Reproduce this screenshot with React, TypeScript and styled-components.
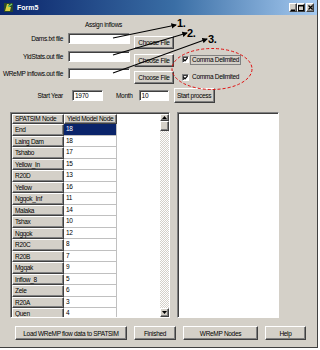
import styled, { createGlobalStyle } from "styled-components";

const GlobalStyle = createGlobalStyle`
  body {
    margin: 0;
    background: #ffffff;
    font-family: "Liberation Sans", Arial, sans-serif;
    font-size: 6.5px;
    letter-spacing: -0.3px;
    color: #000;
  }
`;

const raised = `
  background: #d4d0c8;
  border-top: 1px solid #ffffff;
  border-left: 1px solid #ffffff;
  border-right: 1px solid #404040;
  border-bottom: 1px solid #404040;
  box-shadow: inset -1px -1px 0 #808080;
`;

const sunken = `
  background: #ffffff;
  border-top: 1px solid #808080;
  border-left: 1px solid #808080;
  border-right: 1px solid #ffffff;
  border-bottom: 1px solid #ffffff;
  box-shadow: inset 1px 1px 0 #404040;
`;

const S = {
  Window: styled.div`
    position: relative;
    box-sizing: border-box;
    width: 318px;
    height: 348px;
    background: #d4d0c8;
    border-right: 1px solid #404040;
    border-bottom: 1px solid #404040;
    display: flex;
    flex-direction: column;
  `,
  TitleBar: styled.div`
    height: 15px;
    flex: none;
    display: flex;
    align-items: center;
    padding: 0 3px 0 4px;
    background: linear-gradient(90deg, #0a246a 0%, #3a6ea5 55%, #a6caf0 100%);
  `,
  Title: styled.span`
    margin-left: 4px;
    color: #ffffff;
    font-weight: bold;
    font-size: 7px;
    letter-spacing: 0;
    flex: 1;
  `,
  Controls: styled.div`
    display: flex;
  `,
  ControlButton: styled.div<{ $gap?: number }>`
    ${raised}
    box-sizing: border-box;
    width: 8px;
    height: 9px;
    margin-left: ${(p) => p.$gap ?? 0}px;
    display: flex;
    align-items: center;
    justify-content: center;
  `,
  Body: styled.div`
    display: flex;
    flex-direction: column;
  `,
  Heading: styled.div`
    margin: 5px 0 0 85px;
    line-height: 9px;
    height: 13px;
  `,
  FileRows: styled.div`
    display: grid;
    grid-auto-rows: 17.5px;
  `,
  FileRow: styled.div`
    display: grid;
    grid-template-columns: 64px 62px 40px auto;
    column-gap: 4px;
    align-items: start;
  `,
  Label: styled.span<{ $width?: number }>`
    display: block;
    text-align: right;
    line-height: 11px;
    white-space: nowrap;
    padding-right: 1px;
    ${(p) => (p.$width ? `width: ${p.$width}px; box-sizing: border-box;` : "")}
  `,
  TextBox: styled.div<{ $width: number }>`
    ${sunken}
    box-sizing: border-box;
    width: ${(p) => p.$width}px;
    height: 11px;
    padding-left: 2px;
    line-height: 9px;
  `,
  Button: styled.div<{ $width: number; $height?: number; $top?: number }>`
    ${raised}
    box-sizing: border-box;
    width: ${(p) => p.$width}px;
    height: ${(p) => p.$height ?? 13}px;
    margin-top: ${(p) => p.$top ?? 0}px;
    display: flex;
    align-items: center;
    justify-content: center;
    white-space: nowrap;
  `,
  CheckOption: styled.div`
    display: flex;
    align-items: center;
    margin: 4px 0 0 4px;
  `,
  CheckBox: styled.div`
    ${sunken}
    box-sizing: border-box;
    width: 7px;
    height: 7px;
    display: flex;
    align-items: center;
    justify-content: center;
  `,
  CheckText: styled.span<{ $focus?: boolean }>`
    margin-left: 1px;
    padding: 0 1px;
    line-height: 8px;
    border: 1px solid ${(p) => (p.$focus ? "#808080" : "transparent")};
    white-space: nowrap;
  `,
  StartRow: styled.div`
    display: flex;
    align-items: center;
    height: 15px;
    margin-top: 2.5px;
  `,
  Spacer: styled.span<{ $w: number }>`
    flex: none;
    width: ${(p) => p.$w}px;
  `,
  Panels: styled.div`
    display: flex;
    gap: 7px;
    margin: 9px 0 0 10px;
    height: 206px;
  `,
  Grid: styled.div`
    ${sunken}
    box-sizing: border-box;
    width: 160px;
    height: 206px;
    display: flex;
    overflow: hidden;
    padding: 1px 0 0 1px;
  `,
  Table: styled.div`
    flex: 1;
    display: grid;
    grid-template-columns: 52px 53px;
    grid-template-rows: 10px;
    grid-auto-rows: 11.5px;
    align-content: start;
    overflow: hidden;
  `,
  HeadCell: styled.div`
    ${raised}
    box-sizing: border-box;
    padding-left: 2px;
    line-height: 8px;
    white-space: nowrap;
    overflow: hidden;
  `,
  RowHead: styled.div`
    ${raised}
    box-sizing: border-box;
    padding-left: 2px;
    line-height: 9.5px;
    white-space: nowrap;
  `,
  Cell: styled.div<{ $selected?: boolean }>`
    box-sizing: border-box;
    padding-left: 2px;
    line-height: 10.5px;
    background: ${(p) => (p.$selected ? "#0a246a" : "#ffffff")};
    color: ${(p) => (p.$selected ? "#ffffff" : "#000000")};
    border-right: 1px solid #c0c0c0;
    border-bottom: 1px solid #c0c0c0;
  `,
  ScrollBar: styled.div`
    flex: none;
    width: 9px;
    display: flex;
    flex-direction: column;
    background-color: #ebe9e4;
    background-image: repeating-conic-gradient(#d4d0c8 0% 25%, #ffffff 0% 50%);
    background-size: 2px 2px;
  `,
  ScrollButton: styled.div<{ $h: number }>`
    ${raised}
    box-sizing: border-box;
    height: ${(p) => p.$h}px;
    display: flex;
    align-items: center;
    justify-content: center;
    flex: none;
  `,
  ScrollTrack: styled.div`
    flex: 1;
  `,
  ListBox: styled.div`
    ${sunken}
    box-sizing: border-box;
    width: 102px;
    height: 206px;
  `,
  Footer: styled.div`
    display: flex;
    gap: 7px;
    margin: 8px 0 0 15px;
  `,
  Overlay: styled.svg`
    position: absolute;
    left: 0;
    top: 0;
    pointer-events: none;
  `,
};

const nodes: [string, number][] = [
  ["End", 18],
  ["Laing Dam", 18],
  ["Tshabo", 17],
  ["Yellow_In", 15],
  ["R20D", 13],
  ["Yellow", 16],
  ["Ngqok_Inf", 11],
  ["Malaka", 14],
  ["Tshax", 10],
  ["Ngqok", 12],
  ["R20C", 8],
  ["R20B", 7],
  ["Mgqak", 9],
  ["Inflow_8", 5],
  ["Zele", 6],
  ["R20A", 3],
  ["Quen", 4],
];

const Check = () => (
  <svg width="5" height="5" viewBox="0 0 5 5">
    <path d="M0.5 2.2 L2 3.8 L4.6 0.8" stroke="#000" strokeWidth="1.2" fill="none" />
  </svg>
);

const Arrow = ({ up }: { up?: boolean }) => (
  <svg width="5" height="3" viewBox="0 0 5 3">
    <path d={up ? "M0 3 L2.5 0 L5 3 Z" : "M0 0 L2.5 3 L5 0 Z"} fill="#000" />
  </svg>
);

const AppIcon = () => (
  <svg width="9" height="9" viewBox="0 0 9 9">
    <rect x="0" y="0" width="9" height="9" fill="#2b4a2b" />
    <path d="M1 8 L3 1 L5 1 L4 4 L7 4 L6 8 Z" fill="#d8d040" />
    <path d="M4 4 L8 1" stroke="#6fd06f" strokeWidth="1.2" />
  </svg>
);

type FileRowProps = { label: string; option?: boolean; focus?: boolean };

const FileRow = ({ label, option, focus }: FileRowProps) => (
  <S.FileRow>
    <S.Label>{label}</S.Label>
    <S.TextBox $width={62} />
    <S.Button $width={40} $top={3}>
      Choose File
    </S.Button>
    {option && (
      <S.CheckOption>
        <S.CheckBox>
          <Check />
        </S.CheckBox>
        <S.CheckText $focus={focus}>Comma Delimited</S.CheckText>
      </S.CheckOption>
    )}
  </S.FileRow>
);

export default function App() {
  return (
    <>
      <GlobalStyle />
      <S.Window>
        <S.TitleBar>
          <AppIcon />
          <S.Title>Form5</S.Title>
          <S.Controls>
            <S.ControlButton>
              <svg width="4" height="6" viewBox="0 0 4 6">
                <rect x="0" y="4.5" width="4" height="1.5" fill="#000" />
              </svg>
            </S.ControlButton>
            <S.ControlButton>
              <svg width="6" height="6" viewBox="0 0 6 6">
                <rect x="0.5" y="0.5" width="5" height="5" stroke="#000" fill="none" />
                <rect x="0" y="0" width="6" height="1.5" fill="#000" />
              </svg>
            </S.ControlButton>
            <S.ControlButton $gap={1}>
              <svg width="5" height="5" viewBox="0 0 5 5">
                <path d="M0.5 0.5 L4.5 4.5 M4.5 0.5 L0.5 4.5" stroke="#000" strokeWidth="1.2" />
              </svg>
            </S.ControlButton>
          </S.Controls>
        </S.TitleBar>

        <S.Body>
          <S.Heading>Assign inflows</S.Heading>
          <S.FileRows>
            <FileRow label="Dams.txt file" />
            <FileRow label="YldStats.out file" option focus />
            <FileRow label="WReMP inflows.out file" option />
          </S.FileRows>

          <S.StartRow>
            <S.Label $width={64}>Start Year</S.Label>
            <S.Spacer $w={8} />
            <S.TextBox $width={31}>1970</S.TextBox>
            <S.Spacer $w={13} />
            <span>Month</span>
            <S.Spacer $w={6} />
            <S.TextBox $width={30}>10</S.TextBox>
            <S.Spacer $w={5} />
            <S.Button $width={41} $height={15}>
              Start process
            </S.Button>
          </S.StartRow>

          <S.Panels>
            <S.Grid>
              <S.Table>
                <S.HeadCell>SPATSIM Node</S.HeadCell>
                <S.HeadCell>Yield Model Node</S.HeadCell>
                {nodes.map(([name, value], i) => (
                  <>
                    <S.RowHead key={`h${i}`}>{name}</S.RowHead>
                    <S.Cell key={`c${i}`} $selected={i === 0}>
                      {value}
                    </S.Cell>
                  </>
                ))}
              </S.Table>
              <S.ScrollBar>
                <S.ScrollButton $h={7}>
                  <Arrow up />
                </S.ScrollButton>
                <S.ScrollButton $h={10} />
                <S.ScrollTrack />
                <S.ScrollButton $h={9}>
                  <Arrow />
                </S.ScrollButton>
              </S.ScrollBar>
            </S.Grid>
            <S.ListBox />
          </S.Panels>

          <S.Footer>
            <S.Button $width={112} $height={14}>
              Load WReMP flow data to SPATSIM
            </S.Button>
            <S.Button $width={42} $height={14}>
              Finished
            </S.Button>
            <S.Button $width={75} $height={14}>
              WReMP Nodes
            </S.Button>
            <S.Button $width={41} $height={14}>
              Help
            </S.Button>
          </S.Footer>
        </S.Body>

        <S.Overlay width="320" height="350" viewBox="0 0 320 350">
          <defs>
            <marker id="tip" viewBox="0 0 6 6" refX="5" refY="3" markerWidth="5" markerHeight="5" orient="auto">
              <path d="M0 0 L6 3 L0 6 Z" fill="#000" />
            </marker>
          </defs>
          <g stroke="#000" strokeWidth="1.1" markerEnd="url(#tip)">
            <line x1="113" y1="38" x2="176" y2="25" />
            <line x1="113" y1="55" x2="187" y2="33" />
            <line x1="113" y1="73" x2="207" y2="39" />
          </g>
          <g fontFamily="'Liberation Sans', Arial, sans-serif" fontWeight="bold" fontSize="11" fill="#000">
            <text x="177" y="27">1.</text>
            <text x="187" y="37">2.</text>
            <text x="208" y="43">3.</text>
          </g>
          <ellipse cx="212" cy="69" rx="40" ry="20.5" fill="none" stroke="#e01010" strokeWidth="1" strokeDasharray="3 2" />
        </S.Overlay>
      </S.Window>
    </>
  );
}
